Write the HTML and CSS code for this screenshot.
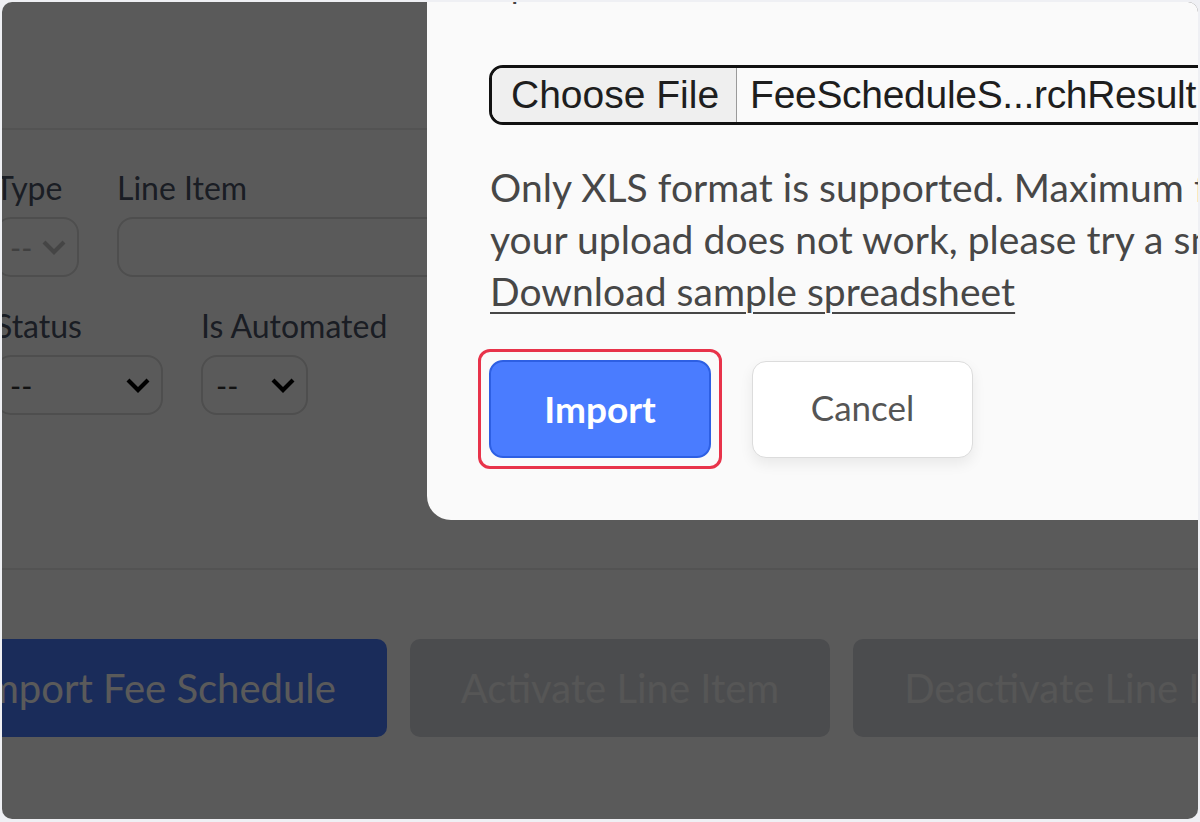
FILE: index.html
```html
<!DOCTYPE html>
<html lang="en">
<head>
  <meta charset="UTF-8" />
  <meta name="viewport" content="width=device-width,initial-scale=1.0" />
  <title>Fee Schedule – Import</title>
  <link rel="stylesheet" href="styles.css">
</head>

<body>
  <div class="screen">

    <!-- ───────── PAGE ───────── -->
    <main class="page">
      <div class="page-head"></div>

      <section class="filters">
        <div class="filter-row">
          <div class="field">
            <label>Type</label>
            <div class="select muted w-type"><span>--</span>
              <svg viewBox="0 0 26 16"><path d="M3 3 13 13 23 3"/></svg></div>
          </div>
          <div class="field grow">
            <label>Line Item</label>
            <div class="text-input"></div>
          </div>
        </div>

        <div class="filter-row">
          <div class="field">
            <label>Status</label>
            <div class="select w-status"><span>--</span>
              <svg viewBox="0 0 26 16"><path d="M3 3 13 13 23 3"/></svg></div>
          </div>
          <div class="field">
            <label>Is Automated</label>
            <div class="select w-auto"><span>--</span>
              <svg viewBox="0 0 26 16"><path d="M3 3 13 13 23 3"/></svg></div>
          </div>
        </div>
      </section>

      <div class="actions">
        <button class="btn primary">Import Fee Schedule</button>
        <button class="btn disabled">Activate Line Item</button>
        <button class="btn disabled">Deactivate Line Item</button>
      </div>
    </main>

    <!-- ───────── MODAL ───────── -->
    <div class="backdrop"></div>

    <div class="modal">
      <p class="modal-label">Spreadsheet</p>

      <div class="file-input">
        <span class="file-btn">Choose File</span>
        <span class="file-name">FeeScheduleS...rchResult.xls</span>
      </div>

      <p class="hint">
        Only XLS format is supported. Maximum file size is 5MB. If<br>
        your upload does not work, please try a smaller file.<br>
        <a href="#">Download sample spreadsheet</a>
      </p>

      <div class="modal-actions">
        <span class="focus-ring"><button class="btn-import">Import</button></span>
        <button class="btn-cancel">Cancel</button>
      </div>
    </div>

  </div>
</body>
</html>
```

FILE: styles.css
```css
:root{
  --blue:#4a7cff;
  --radius:16px;
  font-family:'Lato','Noto Sans',sans-serif;
}

*,*::before,*::after{box-sizing:border-box;margin:0;padding:0}

html,body{background:#eff0f4;overflow:hidden}

/* ---------- FRAME ---------- */
.screen{position:relative;margin:2px;height:817px;border-radius:10px;overflow:hidden;background:#fff}

/* ---------- PAGE (under the backdrop) ---------- */
.page{margin-left:-78px;width:1500px;color:#4b5466}
.page-head{height:128px;border-bottom:2px solid #ebebeb}

.filters{padding:38px 0 0 71px;height:440px;border-bottom:2px solid #ebebeb}
.filter-row{display:flex;gap:38px;margin-bottom:29px}
.field{display:flex;flex-direction:column}
.field.grow{flex:0 0 600px}
.field label{font-size:32px;line-height:40px;margin-bottom:9px;color:#4b5466}

.select,.text-input{height:60px;border:2px solid #dcdcdc;border-radius:var(--radius);
  display:flex;align-items:center;justify-content:space-between;padding:0 10px 0 13px}
.select span{font-size:30px;color:#333}
.select svg{width:26px;height:16px;fill:none;stroke:#000;stroke-width:4.2}
.select.muted span{color:#b5b5b5}
.select.muted svg{stroke:#c4c4c4}
.w-type{width:84px}
.w-status{width:168px}
.w-auto{width:107px}

.actions{display:flex;gap:23px;padding-top:69px}
.btn{height:98px;padding:0 51px;border:none;border-radius:10px;font:400 40px 'Lato',sans-serif;white-space:nowrap}
.btn.primary{background:var(--blue);color:#fff}
.btn.disabled{background:#d4d7dc;color:#f2f2f2}

/* ---------- BACKDROP + MODAL ---------- */
.backdrop{position:absolute;inset:0;background:rgba(0,0,0,.647)}

.modal{position:absolute;top:0;left:425px;width:1000px;padding:0 0 51px 63px;
  background:#fafafa;border-radius:0 0 0 24px;color:#444}
.modal-label{font-size:32px;line-height:40px;margin-top:-36px;padding-left:4px}

.file-input{display:flex;align-items:stretch;height:60px;margin-top:59px;margin-left:-1px;
  border:3px solid #111;border-radius:14px 0 0 14px;overflow:hidden;
  font-family:'Liberation Sans',Arial,sans-serif;font-size:39px;color:#1e1e1e}
.file-btn{display:flex;align-items:center;padding:0 17px 0 19px;background:#efefef;border-right:1.5px solid #9a9a9a}
.file-name{display:flex;align-items:center;padding-left:13px;white-space:nowrap;letter-spacing:-.3px}

.hint{margin-top:36px;font-size:39px;line-height:52px;white-space:nowrap;color:#474747;letter-spacing:.05px}
.hint a{color:#474747;text-decoration:underline;text-underline-offset:6px;text-decoration-thickness:2px}

.modal-actions{display:flex;align-items:center;gap:30px;margin:32px 0 0 -12px}
.focus-ring{display:inline-flex;padding:8px;border:3px solid #e8334a;border-radius:12px}
.btn-import{width:222px;height:98px;border:2px solid #2d5fe3;border-radius:14px;background:var(--blue);
  color:#fff;font:700 37px 'Lato',sans-serif;padding-bottom:2px}
.btn-cancel{width:221px;height:97px;border:1.5px solid #dcdcdc;border-radius:14px;background:#fff;
  color:#555;font:400 35px 'Lato',sans-serif;box-shadow:0 6px 14px rgba(0,0,0,.07);padding-bottom:4px}
```
